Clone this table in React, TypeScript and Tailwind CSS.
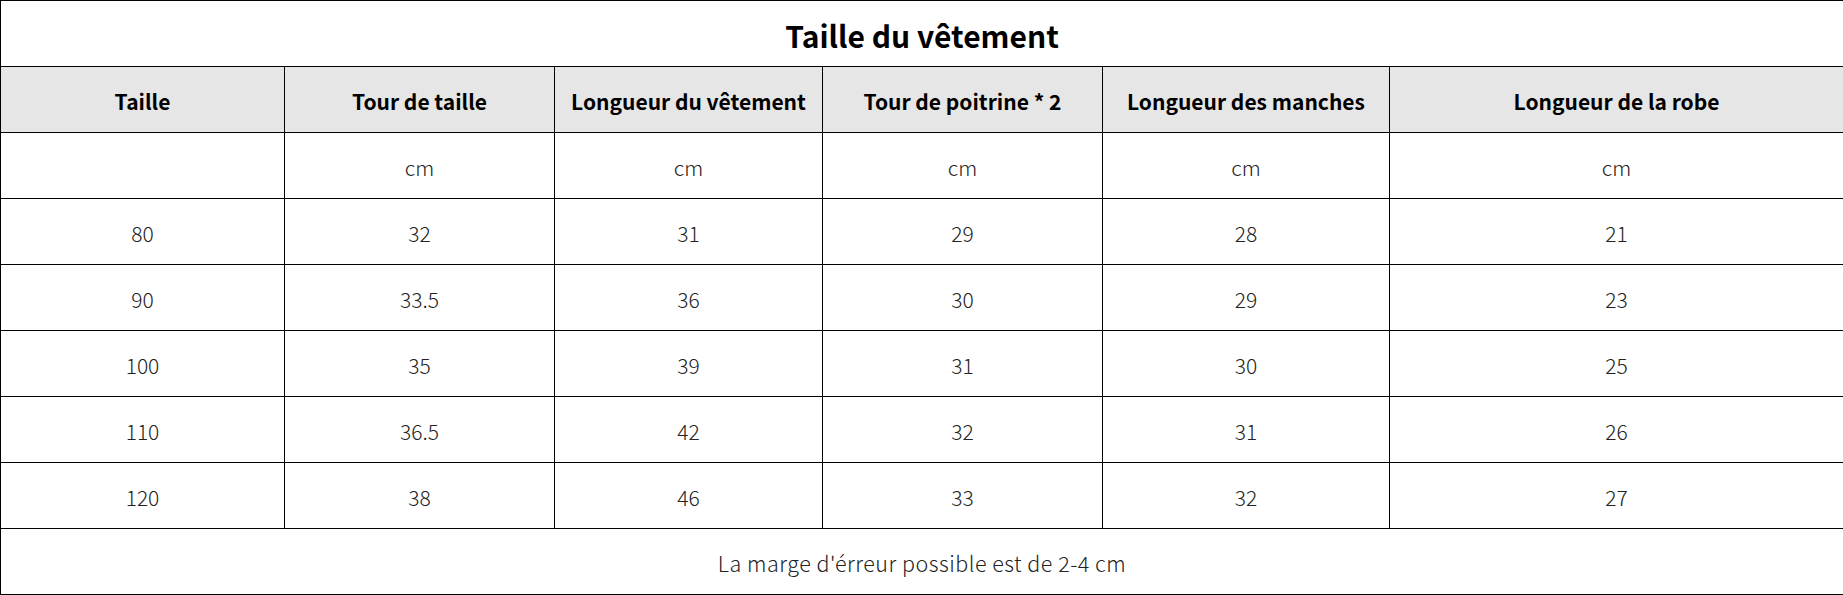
const headers = [
  "Taille",
  "Tour de taille",
  "Longueur du vêtement",
  "Tour de poitrine * 2",
  "Longueur des manches",
  "Longueur de la robe",
];

const widths = ["w-[284px]", "w-[270px]", "w-[268px]", "w-[280px]", "w-[287px]", "w-[454px]"];

const rows = [
  ["", "cm", "cm", "cm", "cm", "cm"],
  ["80", "32", "31", "29", "28", "21"],
  ["90", "33.5", "36", "30", "29", "23"],
  ["100", "35", "39", "31", "30", "25"],
  ["110", "36.5", "42", "32", "31", "26"],
  ["120", "38", "46", "33", "32", "27"],
];

const font = "font-['Noto_Sans_CJK_SC','Noto_Sans',sans-serif]";

export default function App() {
  return (
    <div className={`w-[1843px] h-[595px] bg-white ${font}`}>
      <table className="w-[1843px] border-collapse table-fixed">
        <colgroup>
          {widths.map((w, i) => (
            <col key={i} className={w} />
          ))}
        </colgroup>
        <tbody>
          <tr className="h-[66px]">
            <td colSpan={6} className="border border-black pt-1 text-center text-[30px] font-bold text-black">
              Taille du vêtement
            </td>
          </tr>
          <tr className="h-[66px] bg-[#e6e6e6]">
            {headers.map(h => (
              <td key={h} className="border border-black pt-1 text-center text-[21px] font-bold text-black">
                {h}
              </td>
            ))}
          </tr>
          {rows.map((r, i) => (
            <tr key={i} className="h-[66px]">
              {r.map((c, j) => (
                <td key={j} className="border border-black pt-1 text-center text-[21px] font-light text-[#222]">
                  {c}
                </td>
              ))}
            </tr>
          ))}
          <tr className="h-[66px]">
            <td colSpan={6} className="border border-black pt-1 text-center text-[21.5px] font-light tracking-[0.5px] text-[#222]">
              La marge d'érreur possible est de 2-4 cm
            </td>
          </tr>
        </tbody>
      </table>
    </div>
  );
}
